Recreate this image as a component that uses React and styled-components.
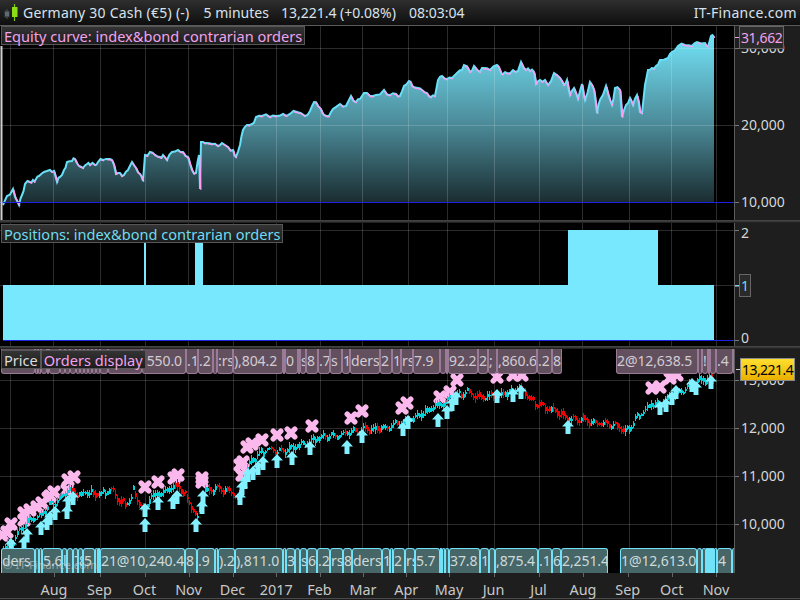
import styled, { createGlobalStyle } from 'styled-components'

const GlobalStyle = createGlobalStyle`
  html, body {
    margin: 0;
    background: #1e1e1e;
    overflow: hidden;
  }
  body {
    font-family: "Noto Sans", "Open Sans", "DejaVu Sans", sans-serif;
  }
`

const PINK = '#f2a2ee'
const CYAN = '#78e8ff'
const PLOT_W = 734

const GRID_X = [10, 53, 100, 145, 188, 233, 276, 320, 362, 408, 447, 494, 539, 582, 629, 671, 716]
const MONTHS = ['Aug', 'Sep', 'Oct', 'Nov', 'Dec', '2017', 'Feb', 'Mar', 'Apr', 'May', 'Jun', 'Jul', 'Aug', 'Sep', 'Oct', 'Nov']

const EQUITY = [[3,205],[7,196],[13,189],[15,197],[19,205],[22,195],[25,184],[30,182],[33,180],[36,179],[39,176],[44,172],[50,170],[54,171],[57,182],[60,177],[64,170],[67,162],[72,161],[75,159],[79,166],[83,168],[87,164],[90,165],[95,165],[98,162],[103,160],[110,159],[114,165],[116,174],[120,173],[124,175],[128,170],[132,162],[136,168],[140,174],[143,181],[145,155],[150,152],[155,155],[160,157],[163,155],[167,160],[172,152],[178,150],[183,152],[188,157],[192,170],[196,173],[199,155],[200,189],[201,142],[203,142],[207,143],[212,144],[218,146],[222,143],[228,147],[233,150],[236,157],[240,145],[243,130],[247,125],[252,124],[256,117],[262,116],[270,117],[276,116],[283,114],[290,114],[297,112],[305,116],[310,111],[314,102],[318,106],[323,114],[329,116],[333,109],[340,104],[346,106],[351,96],[356,102],[360,99],[364,93],[370,96],[376,95],[384,90],[390,95],[396,94],[400,96],[404,86],[409,81],[412,86],[418,88],[422,90],[427,93],[431,97],[435,96],[438,80],[442,76],[447,79],[452,78],[458,72],[462,70],[464,65],[470,72],[474,66],[480,72],[484,68],[490,70],[497,65],[500,70],[503,74],[507,73],[513,70],[518,71],[521,62],[526,70],[530,71],[534,72],[536,84],[540,80],[545,80],[548,85],[554,73],[560,78],[564,85],[567,80],[570,95],[574,88],[578,99],[582,84],[585,100],[590,82],[594,90],[597,113],[600,100],[606,86],[610,100],[612,105],[615,88],[620,90],[622,117],[626,105],[630,98],[633,105],[637,95],[640,112],[642,113],[645,85],[648,70],[652,68],[656,66],[660,60],[668,58],[672,52],[678,46],[685,45],[692,46],[697,42],[705,43],[708,46],[711,36],[714,37]]

const PRICE = [[3,548],[10,545],[20,530],[30,520],[40,515],[50,505],[60,500],[68,490],[75,493],[80,497],[85,492],[95,494],[105,493],[110,488],[115,495],[120,500],[125,505],[130,500],[133,491],[140,505],[145,510],[150,497],[155,495],[160,493],[165,492],[170,487],[178,486],[185,495],[190,505],[197,518],[200,505],[205,490],[210,490],[217,489],[225,490],[233,493],[238,500],[242,480],[250,462],[258,455],[265,450],[272,450],[280,452],[295,447],[310,441],[320,437],[340,434],[362,430],[385,428],[408,420],[425,412],[447,400],[467,392],[480,397],[500,395],[520,388],[535,403],[545,408],[555,410],[565,418],[580,420],[600,423],[615,425],[625,433],[635,420],[650,405],[660,403],[680,392],[700,380],[714,378]]

const ARROWS = [[11,545],[24,543],[27,535],[41,528],[47,523],[50,518],[55,513],[67,512],[68,502],[73,498],[145,525],[145,510],[158,503],[173,502],[177,497],[196,525],[202,507],[203,497],[240,498],[242,488],[245,482],[248,475],[253,473],[258,468],[263,463],[277,461],[292,458],[310,448],[347,447],[362,436],[403,429],[408,422],[438,420],[447,412],[452,404],[456,398],[497,396],[513,395],[521,392],[568,427],[660,408],[666,405],[672,398],[676,392],[692,385],[696,388],[711,382]]

const CROSSES = [[2,535],[7,532],[11,524],[24,520],[24,513],[30,510],[37,507],[42,503],[48,498],[50,496],[54,492],[67,490],[68,480],[74,477],[145,487],[158,482],[174,478],[178,475],[202,482],[202,478],[242,475],[240,465],[243,462],[247,447],[252,444],[262,440],[277,435],[291,433],[312,426],[351,418],[362,411],[402,408],[407,403],[440,397],[450,392],[457,380],[497,377],[513,375],[522,375],[652,388],[660,387],[670,378],[677,375]]

// [left edge, visible text], null text leaves a hole in the strip
const TOP_TAGS = [[1,''],[35,''],[38,''],[41,''],[47,''],[49,''],[60,''],[65,''],[70,''],[76,''],[80,''],[84,''],[88,''],[92,''],[96,''],[100,''],[108,''],[142,',550.0'],[186,'.1'],[198,'.2'],[213,''],[217,':rs'],[233,'),804.2'],[283,''],[285,'0'],[298,''],[300,'s'],[306,'8'],[318,'.7'],[330,'s'],[342,'1'],[350,'ders'],[380,'2'],[392,'1'],[401,'rs'],[413,'7.9'],[440,''],[446,''],[448,'92.2'],[478,'2'],[488,';'],[497,',860.6'],[537,'.2'],[552,'8'],[562,null],[616,'2@12,638.5'],[698,''],[702,'!'],[708,''],[710,''],[716,'.4'],[733,'']]

const BOTTOM_TAGS = [[1,'ders'],[35,''],[39,''],[42,'5.6'],[62,'l'],[67,''],[73,'7'],[78,'8'],[83,'5'],[95,''],[98,''],[100,'21@10,240.4'],[185,'8'],[197,'.9'],[215,''],[218,').2'],[235,'),811.0'],[283,''],[286,'3'],[295,''],[300,'s'],[307,'6'],[317,'.2'],[330,'rs'],[343,'8'],[352,'ders'],[382,'1'],[390,''],[393,'2'],[405,'rs'],[415,'5.7'],[440,''],[442,''],[445,''],[449,'37.8'],[480,'1'],[489,''],[495,',875.4'],[538,'.1'],[552,'6'],[561,'2,251.4'],[608,null],[620,'1@12,613.0'],[697,''],[702,''],[706,''],[708,''],[710,''],[712,''],[714,''],[717,'4'],[732,'']]

const Page = styled.div`
  width: 800px;
  height: 600px;
  display: flex;
  flex-direction: column;
  background: #1e1e1e;
  overflow: hidden;
`

const TitleBar = styled.header`
  height: 25px;
  flex: none;
  display: flex;
  align-items: center;
  padding: 0 3px 0 4px;
  border-top: 1px solid #3c3c3c;
  box-sizing: content-box;
  margin-top: -1px;
  border-bottom: 1px solid #5a5a5a;
  background: linear-gradient(#2e2e2e, #0e0e0e);
  color: #d8e2ec;
  font-size: 14px;
  white-space: nowrap;
`

const TitleText = styled.span`
  margin-left: ${p => p.$gap}px;
  letter-spacing: ${p => p.$spread || 0}px;
  &:last-child {
    margin-left: auto;
  }
`

const Divider = styled.div`
  height: 3px;
  flex: none;
  background: linear-gradient(#4a4a4a, #333 60%, #161616);
`

const Panel = styled.section`
  height: ${p => p.$height}px;
  flex: none;
  display: flex;
`

const Plot = styled.div`
  position: relative;
  width: ${PLOT_W}px;
  flex: none;
  background: #000;
  border-right: 1px solid #5c5c5c;
  overflow: hidden;
  svg {
    display: block;
  }
`

const Legend = styled.div`
  position: absolute;
  top: ${p => p.$top}px;
  left: 1px;
  display: flex;
`

const LegendLabel = styled.span`
  height: 19px;
  padding: 0 2px;
  line-height: 18px;
  font-size: 14.55px;
  white-space: nowrap;
  color: ${p => p.$color};
  background: linear-gradient(#333, #1c1c1c);
  border: 1px solid #565656;
  box-sizing: border-box;
`

const Axis = styled.div`
  position: relative;
  flex: 1;
  display: flex;
  flex-direction: column;
  gap: ${p => p.$gap}px;
  padding-top: ${p => p.$pad}px;
  background: #1e1e1e;
`

const Tick = styled.div`
  height: 14px;
  line-height: 14px;
  padding-left: 6px;
  font-size: 14px;
  color: #d6d6d6;
  position: relative;
  &::before {
    content: '';
    position: absolute;
    left: 0;
    top: ${p => p.$mark ?? 7}px;
    width: 4px;
    height: 1px;
    background: #777;
  }
`

const Badge = styled.div`
  position: absolute;
  left: ${p => p.$left}px;
  top: ${p => p.$top}px;
  height: 23px;
  line-height: 21px;
  padding: 0 1px;
  box-sizing: border-box;
  font-size: 14px;
  letter-spacing: -0.4px;
  white-space: nowrap;
  color: ${p => p.$color};
  background: #2a2a2a;
  border: 1px solid #666;
  &::before {
    content: '';
    position: absolute;
    left: -5px;
    top: 10px;
    width: 4px;
    height: 1px;
    background: ${p => p.$color};
  }
`

const PriceBadge = styled(Badge)`
  color: #000;
  letter-spacing: -0.55px;
  background: linear-gradient(#ffdf30, #eab000);
  border-color: #8a8a8a;
  &::before {
    background: #ccc;
  }
`

const TagStrip = styled.div`
  position: absolute;
  left: 0;
  height: 25px;
  display: flex;
  ${p => (p.$bottom ? 'bottom: 0;' : 'top: 0;')}
`

const Tag = styled.div`
  box-sizing: border-box;
  flex: none;
  overflow: hidden;
  height: 25px;
  line-height: 24px;
  font-size: 14px;
  letter-spacing: -0.1px;
  white-space: nowrap;
  color: #d2ccd2;
  background: #63505f;
  border: 1px solid #9a7a97;
  border-top: 0;
  border-radius: 0 0 3px 3px;
`

const BottomTag = styled(Tag)`
  color: #cfdada;
  background: #466668;
  border: 1px solid #72e2f8;
  border-bottom: 0;
  border-radius: 3px 3px 0 0;
`

const Watermark = styled.div`
  position: absolute;
  left: 3px;
  bottom: 1px;
  font-size: 11.5px;
  line-height: 14px;
  color: rgba(215, 215, 215, 0.55);
  pointer-events: none;
`

const TimeAxis = styled.div`
  height: 25px;
  width: ${PLOT_W}px;
  flex: none;
  display: flex;
`

const AxisEdge = styled.div`
  height: 1px;
  flex: none;
  background: #4a4a4a;
`

const TimeCell = styled.div`
  flex: none;
  position: relative;
  text-align: center;
  font-size: 14.4px;
  line-height: 34px;
  color: #c8c8c8;
  &::before {
    content: '';
    position: absolute;
    left: 50%;
    top: 0;
    width: 1px;
    height: 4px;
    background: #666;
  }
`

const linePoints = pts => pts.map(p => p.join(',')).join(' ')

const noise = x => {
  const v = Math.sin(x * 12.9898) * 43758.5453
  return (v - Math.floor(v)) * 2 - 1
}

// the hand-read curve is too clean, add the small ticks between its points
const roughen = pts =>
  pts.flatMap((p, i) => {
    const prev = pts[i - 1]
    if (!prev || p[0] - prev[0] < 3) return [p]
    const mx = (prev[0] + p[0]) / 2
    return [[mx, (prev[1] + p[1]) / 2 + noise(mx) * 2.2], p]
  })

const Grid = ({ top, bottom, rows }) => (
  <g stroke="rgba(255,255,255,0.17)" strokeWidth="1">
    {GRID_X.map(x => <line key={x} x1={x + 0.5} x2={x + 0.5} y1={top} y2={bottom} />)}
    {rows.map(y => <line key={y} x1="0" x2={PLOT_W} y1={y + 0.5} y2={y + 0.5} />)}
  </g>
)

const EquityChart = () => {
  const curve = roughen(EQUITY)
  const last = curve[curve.length - 1]
  const area = `3,202 ${linePoints(curve)} ${last[0]},202`
  const falling = curve.slice(1)
    .map((p, i) => (p[1] > curve[i][1] ? `M${curve[i].join(' ')}L${p.join(' ')}` : ''))
    .join('')
  return (
    <svg width={PLOT_W} height="194" viewBox="0 26 734 194">
      <defs>
        <linearGradient id="equityFill" gradientUnits="userSpaceOnUse" x1="0" x2="0" y1="36" y2="202">
          <stop offset="0" stopColor="#72e2f6" />
          <stop offset="0.55" stopColor="#4a8795" />
          <stop offset="1" stopColor="#1a2d31" />
        </linearGradient>
      </defs>
      <polygon points={area} fill="url(#equityFill)" />
      <Grid top={26} bottom={220} rows={[48, 125]} />
      <polyline points={linePoints(curve)} fill="none" stroke="#68e0f8" strokeWidth="2" />
      <path d={falling} transform="translate(0.8 0.8)" fill="none" stroke="#ff9cf0" strokeWidth="1.4" />
      <line x1="0" x2={PLOT_W} y1="202.5" y2="202.5" stroke="#2020e0" />
      <line x1="1.5" x2="1.5" y1="46" y2="220" stroke="#cfcfcf" strokeWidth="2" />
    </svg>
  )
}

const PositionsChart = () => (
  <svg width={PLOT_W} height="123" viewBox="0 223 734 123">
    <Grid top={223} bottom={346} rows={[230, 285]} />
    <g fill={CYAN}>
      <rect x="3" y="285" width="711" height="55" />
      <rect x="144" y="240" width="2" height="45" />
      <rect x="195" y="240" width="8" height="45" />
      <rect x="568" y="230" width="90" height="55" />
    </g>
    <line x1="3" x2={PLOT_W} y1="340.5" y2="340.5" stroke="#2020e0" />
  </svg>
)

const priceAt = x => {
  const i = PRICE.findIndex(p => p[0] >= x)
  if (i < 0) return PRICE[PRICE.length - 1][1]
  if (i === 0) return PRICE[0][1]
  const [x0, y0] = PRICE[i - 1]
  const [x1, y1] = PRICE[i]
  return y0 + ((y1 - y0) * (x - x0)) / (x1 - x0)
}

const buildCandles = () => {
  const out = []
  for (let x = 3; x < 714; x += 2) {
    const mid = priceAt(x) + Math.sin(x * 0.6) * 2 + noise(x) * 1.5
    const size = 0.8 + Math.abs(noise(x + 3)) * 1.6
    const reach = 0.5 + Math.abs(noise(x + 7)) * 3
    // colour runs follow the trend, with an odd bar against it
    const falling = priceAt(x + 4) - priceAt(x - 4) + Math.cos(x * 0.6) * 2.4 + noise(x + 11) * 1.2 > 0
    out.push({ x, top: mid - size, height: size * 2, hi: mid - size - reach, lo: mid + size + reach, falling })
  }
  return out
}

const PriceChart = () => (
  <svg width={PLOT_W} height="224" viewBox="0 349 734 224">
    <defs>
      <path id="cross" d="M-3.8 -3.8L3.8 3.8M3.8 -3.8L-3.8 3.8" stroke="#fbb8ec" strokeWidth="5.4" strokeLinecap="round" />
      <path id="arrow" d="M0 -7L6 -0.5H2.5V7H-2.5V-0.5H-6Z" fill="#82f0ff" />
    </defs>
    <Grid top={349} bottom={573} rows={[380, 428, 476, 524]} />
    {CROSSES.map(([x, y]) => <use key={`${x}-${y}`} href="#cross" x={x} y={y} />)}
    <g shapeRendering="crispEdges">
      {buildCandles().map(c => (
        <g key={c.x} fill={c.falling ? '#f00000' : '#00d0d8'}>
          <rect x={c.x} y={c.hi} width="1" height={c.lo - c.hi} />
          <rect x={c.x - 0.5} y={c.top} width="2" height={c.height} />
        </g>
      ))}
    </g>
    {ARROWS.map(([x, y]) => <use key={`${x}-${y}`} href="#arrow" x={x} y={y} />)}
  </svg>
)

const Tags = ({ items, as: Item, bottom }) => (
  <TagStrip $bottom={bottom}>
    {items.map(([x, text], i) => {
      const next = items[i + 1] ? items[i + 1][0] : PLOT_W + 3
      const width = next - x
      if (text === null) return <div key={x} style={{ width }} />
      return <Item key={x} style={{ width, marginLeft: i === 0 ? x : 0 }}>{text}</Item>
    })}
  </TagStrip>
)

const CandleIcon = () => (
  <svg width="15" height="18" viewBox="0 0 15 18" style={{ flex: 'none' }}>
    <path d="M3 5.5V14.5" stroke="#777" />
    <rect x="0.5" y="7" width="5" height="6" fill="#5c6a72" stroke="#2a2f33" />
    <path d="M10.5 0V17" stroke="#7ccb12" strokeWidth="1.2" />
    <rect x="8" y="3" width="5.5" height="10" fill="#8ddc18" />
  </svg>
)

const timeCells = () =>
  MONTHS.map((label, i) => {
    const x = GRID_X[i + 1]
    const left = (GRID_X[i] + x) / 2
    const right = i + 2 < GRID_X.length ? (x + GRID_X[i + 2]) / 2 : 2 * x - left
    return { label, left, width: right - left }
  })

const App = () => {
  const cells = timeCells()
  return (
    <Page>
      <GlobalStyle />
      <TitleBar>
        <CandleIcon />
        <TitleText $gap={4} $spread={0.25}>Germany 30 Cash (€5) (-)</TitleText>
        <TitleText $gap={14}>5 minutes</TitleText>
        <TitleText $gap={12}>13,221.4 (+0.08%)</TitleText>
        <TitleText $gap={13}>08:03:04</TitleText>
        <TitleText $spread={0.3}>IT-Finance.com</TitleText>
      </TitleBar>
      <Panel $height={194}>
        <Plot>
          <EquityChart />
          <Legend $top={0}>
            <LegendLabel $color={PINK}>Equity curve: index&amp;bond contrarian orders</LegendLabel>
          </Legend>
        </Plot>
        <Axis $pad={15} $gap={63}>
          <Tick>30,000</Tick>
          <Tick>20,000</Tick>
          <Tick>10,000</Tick>
          <Badge $left={4} $top={0} $color={PINK}>31,662</Badge>
        </Axis>
      </Panel>
      <Divider />
      <Panel $height={123}>
        <Plot>
          <PositionsChart />
          <Legend $top={1}>
            <LegendLabel $color="#6fdcf0">Positions: index&amp;bond contrarian orders</LegendLabel>
          </Legend>
        </Plot>
        <Axis $pad={3} $gap={38.5}>
          <Tick $mark={4}>2</Tick>
          <Tick>1</Tick>
          <Tick $mark={9}>0</Tick>
          <Badge $left={4} $top={51} $color="#6fdcf0">1</Badge>
        </Axis>
      </Panel>
      <Divider />
      <Panel $height={224}>
        <Plot>
          <PriceChart />
          <Tags items={TOP_TAGS} as={Tag} />
          <Tags items={BOTTOM_TAGS} as={BottomTag} bottom />
          <Legend $top={1}>
            <LegendLabel $color="#dcdcdc">Price</LegendLabel>
            <LegendLabel $color={PINK}>Orders display</LegendLabel>
          </Legend>
          <Watermark>© IT-Finance.com</Watermark>
        </Plot>
        <Axis $pad={24} $gap={34}>
          <Tick>13,000</Tick>
          <Tick>12,000</Tick>
          <Tick>11,000</Tick>
          <Tick>10,000</Tick>
          <PriceBadge $left={5} $top={9}>13,221.4</PriceBadge>
        </Axis>
      </Panel>
      <TimeAxis>
        <div style={{ width: cells[0].left, flex: 'none' }} />
        {cells.map((c, i) => (
          <TimeCell key={i} style={{ width: c.width }}>{c.label}</TimeCell>
        ))}
      </TimeAxis>
      <AxisEdge />
    </Page>
  )
}

export default App
